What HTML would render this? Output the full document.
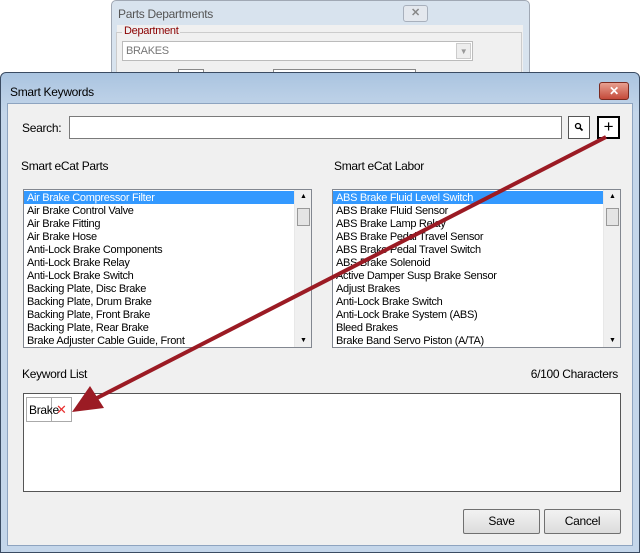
<!DOCTYPE html>
<html><head><meta charset="utf-8"><style>
*{box-sizing:border-box;margin:0;padding:0}
body{width:640px;height:553px;background:#fff;position:relative;overflow:hidden;font-family:"Liberation Sans",sans-serif;font-size:11px;color:#000;letter-spacing:-0.3px}
.abs{position:absolute}
.list{position:absolute;background:#fff;border:1px solid #828790;overflow:hidden}
.list .r{height:13px;line-height:14px;padding-left:3px;white-space:nowrap}
.list .sel{background:#3399ff;color:#fff;margin-right:17px}
.sb{position:absolute;right:0;top:0;bottom:0;width:17px;background:#f0f0f0;border-left:1px solid #e8e8e8}
.btn{position:absolute;background:linear-gradient(#f2f2f2,#dcdcdc);border:1px solid #707070;border-radius:2px;text-align:center;font-size:12px}
</style></head><body>
<div class="abs" style="left:111px;top:0;width:419px;height:80px;background:#d8e3ee;border:1px solid #a0a8b4;border-radius:5px 5px 0 0"></div>
<div class="abs" style="left:118px;top:7px;font-size:12px;color:#555">Parts Departments</div>
<div class="abs" style="left:403px;top:5px;width:25px;height:17px;border:1px solid #a8b0bc;border-radius:3px;background:#e4e8ee;text-align:center;line-height:14px;color:#888;font-weight:bold">✕</div>
<div class="abs" style="left:117px;top:25px;width:406px;height:55px;background:#f0f0f0"></div>
<div class="abs" style="left:116px;top:32px;width:406px;height:50px;border:1px solid #ccc"></div>
<div class="abs" style="left:122px;top:25px;background:#f0f0f0;padding:0 2px;color:#8b0000;font-size:11px">Department</div>
<div class="abs" style="left:122px;top:41px;width:351px;height:20px;border:1px solid #bbb;background:#fff;color:#777;font-size:11px;padding:3px 3px">BRAKES</div>
<div class="abs" style="left:456px;top:43px;width:15px;height:16px;background:#eee;border:1px solid #ccc;color:#999;font-size:8px;text-align:center;line-height:15px">▼</div>
<div class="abs" style="left:178px;top:69px;width:26px;height:6px;border:1px solid #888;background:#fff"></div>
<div class="abs" style="left:273px;top:69px;width:143px;height:6px;border:1px solid #888;background:#fff"></div>
<div class="abs" style="left:0;top:72px;width:640px;height:481px;background:linear-gradient(#aac4e0,#c4d6ea 40px,#c4d6ea);border:1px solid #3a4b62;border-radius:6px 6px 0 0"></div>
<div class="abs" style="left:10px;top:85px;font-size:12px">Smart Keywords</div>
<div class="abs" style="left:599px;top:82px;width:30px;height:18px;background:linear-gradient(#e8a090,#c44a3a);border:1px solid #7a2a20;border-radius:3px;color:#fff;text-align:center;font-weight:bold;line-height:16px;font-size:12px">✕</div>
<div class="abs" style="left:7px;top:103px;width:626px;height:443px;background:#f0f0f0;border:1px solid #8ea4c0"></div>
<div class="abs" style="left:22px;top:121px;font-size:12px">Search:</div>
<div class="abs" style="left:69px;top:116px;width:493px;height:23px;background:#fff;border:1px solid #7a7a7a"></div>
<div class="abs" style="left:568px;top:116px;width:22px;height:23px;background:#fff;border:1px solid #555"><svg width="20" height="21"><circle cx="9" cy="9" r="2.5" fill="none" stroke="#000" stroke-width="1.3"/><line x1="11" y1="11" x2="13.5" y2="13.5" stroke="#000" stroke-width="1.8"/></svg></div>
<div class="abs" style="left:597px;top:116px;width:23px;height:23px;background:#fff;border:2px solid #000;font-size:17px;text-align:center;line-height:18px">+</div>
<div class="abs" style="left:21px;top:159px;font-size:12px">Smart eCat Parts</div>
<div class="abs" style="left:334px;top:159px;font-size:12px">Smart eCat Labor</div>
<div class="list" style="left:23px;top:189px;width:289px;height:159px;padding-top:1px">
<div class="r sel">Air Brake Compressor Filter</div><div class="r">Air Brake Control Valve</div><div class="r">Air Brake Fitting</div><div class="r">Air Brake Hose</div><div class="r">Anti-Lock Brake Components</div><div class="r">Anti-Lock Brake Relay</div><div class="r">Anti-Lock Brake Switch</div><div class="r">Backing Plate, Disc Brake</div><div class="r">Backing Plate, Drum Brake</div><div class="r">Backing Plate, Front Brake</div><div class="r">Backing Plate, Rear Brake</div><div class="r">Brake Adjuster Cable Guide, Front</div>
<div class="sb"><span class="abs" style="left:5px;top:3px;font-size:7px">▲</span><span class="abs" style="left:2px;top:18px;width:13px;height:18px;border:1px solid #999;background:#e4e4e4"></span><span class="abs" style="left:5px;bottom:3px;font-size:7px">▼</span></div>
</div>
<div class="list" style="left:332px;top:189px;width:289px;height:159px;padding-top:1px">
<div class="r sel">ABS Brake Fluid Level Switch</div><div class="r">ABS Brake Fluid Sensor</div><div class="r">ABS Brake Lamp Relay</div><div class="r">ABS Brake Pedal Travel Sensor</div><div class="r">ABS Brake Pedal Travel Switch</div><div class="r">ABS Brake Solenoid</div><div class="r">Active Damper Susp Brake Sensor</div><div class="r">Adjust Brakes</div><div class="r">Anti-Lock Brake Switch</div><div class="r">Anti-Lock Brake System (ABS)</div><div class="r">Bleed Brakes</div><div class="r">Brake Band Servo Piston (A/TA)</div>
<div class="sb"><span class="abs" style="left:5px;top:3px;font-size:7px">▲</span><span class="abs" style="left:2px;top:18px;width:13px;height:18px;border:1px solid #999;background:#e4e4e4"></span><span class="abs" style="left:5px;bottom:3px;font-size:7px">▼</span></div>
</div>
<div class="abs" style="left:22px;top:367px;font-size:12px">Keyword List</div>
<div class="abs" style="right:22px;top:367px;font-size:12px">6/100 Characters</div>
<div class="abs" style="left:23px;top:393px;width:598px;height:99px;background:#fff;border:1px solid #555"></div>
<div class="abs" style="left:26px;top:397px;width:46px;height:25px;border:1px solid #aaa;background:#fff"></div>
<div class="abs" style="left:51px;top:397px;width:1px;height:25px;background:#aaa"></div>
<div class="abs" style="left:29px;top:403px;font-size:12px">Brake</div>
<div class="abs" style="left:56px;top:402px;font-size:13px;color:#e83030">✕</div>
<div class="btn" style="left:463px;top:509px;width:77px;height:25px;line-height:23px">Save</div>
<div class="btn" style="left:544px;top:509px;width:77px;height:25px;line-height:23px">Cancel</div>
<svg class="abs" style="left:0;top:0" width="640" height="553">
<line x1="606" y1="137" x2="95" y2="399" stroke="#9b1b24" stroke-width="4"/>
<polygon points="72,412 90,386 104,408" fill="#9b1b24"/>
</svg>
</body></html>
